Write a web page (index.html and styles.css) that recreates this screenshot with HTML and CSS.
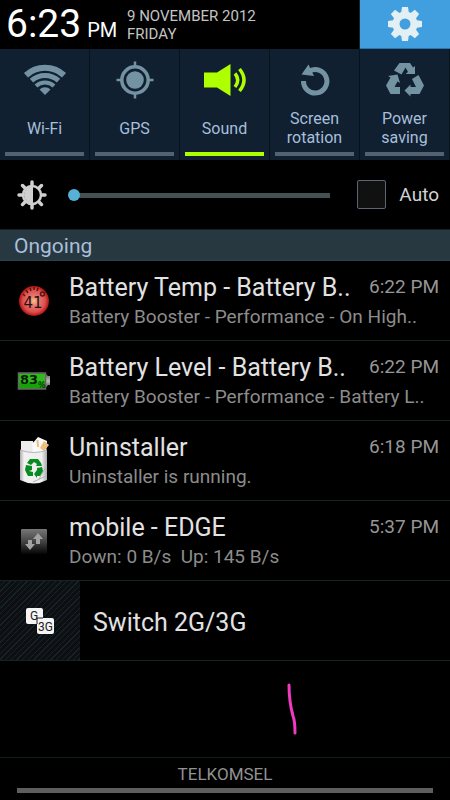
FILE: index.html
```html
<!DOCTYPE html>
<html lang="en">
<head>
<meta charset="utf-8">
<meta name="viewport" content="width=device-width, initial-scale=1">
<title>Notifications</title>
<link rel="stylesheet" href="styles.css">
</head>
<body>
<div class="panel">
  <header class="status">
    <div class="clock"><span class="clock-time">6:23</span><span class="clock-half">PM</span></div>
    <div class="date">9 NOVEMBER 2012<br>FRIDAY</div>
    <button class="settings" type="button" aria-label="Settings">
      <svg width="36" height="36" viewBox="-18 -18 36 36">
        <g fill="#e2f0f3">
          <g id="teeth"><path id="tooth" d="M-3-17H3L4-10H-4Z"/><use href="#tooth" transform="rotate(45)"/><use href="#tooth" transform="rotate(90)"/><use href="#tooth" transform="rotate(135)"/></g>
          <use href="#teeth" transform="rotate(180)"/>
        </g>
        <circle r="9" fill="none" stroke="#e2f0f3" stroke-width="7"/>
      </svg>
    </button>
  </header>

  <nav class="tiles">
    <button class="tile" type="button">
      <svg class="tile-icon" viewBox="0 0 48 40" fill="none" stroke="#7393a3">
        <path stroke-width="6" d="M5 15.200A28 28 0 0 1 43 15.200"/>
        <path stroke-width="5" d="M10.500 20.700A20 20 0 0 1 37.500 20.700"/>
        <path stroke-width="4" d="M15 26A13 13 0 0 1 33 26"/>
        <path fill="#7393a3" stroke="none" d="M24 35L18.500 29.500A8 8 0 0 1 29.500 29.500Z"/>
      </svg>
      <span class="tile-label">Wi-Fi</span>
      <span class="tile-bar"></span>
    </button>
    <button class="tile" type="button">
      <svg class="tile-icon" viewBox="0 0 48 40" fill="none" stroke="#7393a3">
        <circle cx="24" cy="20" r="13.200" stroke-width="3.500"/>
        <circle cx="24" cy="20" r="8.800" fill="#7393a3" stroke="none"/>
        <path stroke-width="2.500" d="M24 1.500V6M24 34V38.500M5.500 20H10M38 20H42.500"/>
      </svg>
      <span class="tile-label">GPS</span>
      <span class="tile-bar"></span>
    </button>
    <button class="tile tile-on" type="button" aria-pressed="true">
      <svg class="tile-icon" viewBox="0 0 48 40">
        <path fill="#aeff00" d="M3 12.500H16L29.500 4V36L16 27.500H3Z"/>
        <path fill="none" stroke="#aeff00" stroke-width="3.500" d="M34 13.500Q39.500 20 34 27M38.500 9Q47.500 20 38.500 31"/>
      </svg>
      <span class="tile-label">Sound</span>
      <span class="tile-bar"></span>
    </button>
    <button class="tile" type="button">
      <svg class="tile-icon" viewBox="0 0 48 40">
        <path fill="none" stroke="#7393a3" stroke-width="5" d="M12.500 21A11.700 11.700 0 1 0 19 10.800"/>
        <path fill="#7393a3" d="M10.500 14.500L17.500 4.500L23 16Z"/>
      </svg>
      <span class="tile-label">Screen rotation</span>
      <span class="tile-bar"></span>
    </button>
    <button class="tile" type="button">
      <svg class="tile-icon" viewBox="0 0 48 40" fill="#7393a3">
        <path d="M18.500 3H29L32 7.500L34 6V14H24.500L27 12L24.500 7.500L20.500 14.500L13 10.500Z"/>
        <path d="M7 16L16.500 14.500L19 23L16.500 21.500L13.500 27H19V34H9.500L5 25.500L9.500 17.500Z"/>
        <path d="M31 19L37.500 15L43 25.500L38.500 34H29.500V36.500L23.500 30.500L29.500 24.500V27H35Z"/>
      </svg>
      <span class="tile-label">Power saving</span>
      <span class="tile-bar"></span>
    </button>
  </nav>

  <section class="brightness">
    <svg class="sun" viewBox="-16 -16 32 32" fill="none" stroke="#d0d0d0">
      <circle r="9" stroke-width="2.500"/>
      <path d="M1-9A9 9 0 0 0 1 9Z" fill="#d0d0d0" stroke="none"/>
      <path stroke-width="3.500" stroke-linecap="round" d="M0-13V-10M0 13V10M-13 0H-10M13 0H10M-9.500-9.500L-7-7M9.500-9.500L7-7M-9.500 9.500L-7 7M9.500 9.500L7 7"/>
    </svg>
    <input class="slider" type="range" min="0" max="100" value="0" aria-label="Brightness">
    <label class="auto"><input class="check" type="checkbox">Auto</label>
  </section>

  <h2 class="section-title">Ongoing</h2>

  <ul class="list">
    <li class="item">
      <svg class="item-icon" viewBox="0 0 34 50">
        <defs><radialGradient id="red"><stop offset="0" stop-color="#f9c27c"/><stop offset=".3" stop-color="#e57c74"/><stop offset=".75" stop-color="#dc4f4c"/><stop offset="1" stop-color="#b01010"/></radialGradient></defs>
        <circle cx="17" cy="25" r="15" fill="url(#red)"/>
        <path d="M6 18L8 20M9 14L11 17M13 12L14 15M17 11V14M21 12L20 15" stroke="#571414" stroke-width="1.500"/>
        <circle cx="25.500" cy="18" r="2" fill="none" stroke="#571414" stroke-width="1.500"/>
        <text x="16" y="32" class="temp-text" text-anchor="middle">41</text>
      </svg>
      <div class="item-body">
        <div class="item-head"><span class="item-title">Battery Temp - Battery B..</span><time class="item-time">6:22 PM</time></div>
        <div class="item-text">Battery Booster - Performance - On High..</div>
      </div>
    </li>
    <li class="item">
      <svg class="item-icon" viewBox="0 0 34 50">
        <defs><linearGradient id="cap" x2="0" y2="1"><stop offset="0" stop-color="#555"/><stop offset=".5" stop-color="#bbb"/><stop offset="1" stop-color="#444"/></linearGradient></defs>
        <path d="M28 17L31 20H33V29H31L28 33Z" fill="url(#cap)"/>
        <rect x="1.500" y="17" width="27" height="16" fill="#18a008" stroke="#666" stroke-width="1.500"/>
        <path d="M2.500 18H28V25L20 27H2.500Z" fill="#32b91b"/>
        <text x="3" y="28" class="level-text">83</text>
        <text x="21" y="32" class="percent-text">%</text>
      </svg>
      <div class="item-body">
        <div class="item-head"><span class="item-title">Battery Level - Battery B..</span><time class="item-time">6:22 PM</time></div>
        <div class="item-text">Battery Booster - Performance - Battery L..</div>
      </div>
    </li>
    <li class="item">
      <svg class="item-icon" viewBox="0 0 34 50">
        <defs><linearGradient id="bin"><stop offset="0" stop-color="#aaa"/><stop offset=".15" stop-color="#f1f1f1"/><stop offset=".8" stop-color="#eee"/><stop offset="1" stop-color="#aaa"/></linearGradient></defs>
        <path d="M4 5H16L17 18H4Z" fill="#ececec"/>
        <path d="M15 8L21 1L30 5L29 18H16Z" fill="#fafafa"/>
        <path d="M27 5L32 9L27 15L23 12Z" fill="#efbd7c"/>
        <path d="M20.500 4L21 11" stroke="#efbd7c" stroke-width="2"/>
        <path d="M3 14Q17 19 30 14V44Q17 51 3 44Z" fill="url(#bin)"/>
        <path d="M3 14Q17 19 30 14M29 31L22 43M16 46L29 40" fill="none" stroke="#b4b4b4"/>
        <g fill="#078b20"><path d="M13 23H21L24 27L25 30H19L20 28L17 26L14 29L10 27Z"/><path d="M9 29L15 30L15 34L12 35L16 36V40H11L8 34Z"/><path d="M20 32L25 31L26 35L23 40H20V42L17 38L20 34Z"/></g>
      </svg>
      <div class="item-body">
        <div class="item-head"><span class="item-title">Uninstaller</span><time class="item-time">6:18 PM</time></div>
        <div class="item-text">Uninstaller is running.</div>
      </div>
    </li>
    <li class="item">
      <svg class="item-icon" viewBox="0 0 34 50">
        <defs><linearGradient id="fade" x2="0" y2="1"><stop offset="0" stop-color="#777"/><stop offset=".5" stop-color="#444"/><stop offset="1" stop-color="#050505"/></linearGradient></defs>
        <rect x="4" y="13" width="26" height="25" rx="1" fill="url(#fade)"/>
        <path fill="#a2a2a2" d="M11 24H15V28H18L13 34L8 28H11ZM19 28V23H16L21 17L26 23H23V28Z"/>
      </svg>
      <div class="item-body">
        <div class="item-head"><span class="item-title">mobile - EDGE</span><time class="item-time">5:37 PM</time></div>
        <div class="item-text">Down: 0 B/s&nbsp; Up: 145 B/s</div>
      </div>
    </li>
    <li class="item item-switch">
      <div class="thumb">
        <svg width="30" height="28" viewBox="0 0 30 28">
          <rect x="1" y="1" width="17" height="16" rx="2" fill="#f5f5f5"/>
          <rect x="12" y="11" width="17" height="16" rx="2" fill="#f5f5f5"/>
          <path d="M12 17V11H18" fill="none" stroke="#222"/>
          <text x="5" y="13" class="badge-text">G</text>
          <text x="13" y="24" class="badge-text">3G</text>
        </svg>
      </div>
      <span class="item-title">Switch 2G/3G</span>
    </li>
  </ul>

  <div class="space">
    <svg class="stroke" width="14" height="56" viewBox="0 0 14 56"><path d="M4 4C4 14 5 24 8 35Q10 40 10 52" fill="none" stroke="#f03ac0" stroke-width="3" stroke-linecap="round"/></svg>
  </div>

  <footer class="carrier"><span>TELKOMSEL</span><span class="handle"></span></footer>
</div>
</body>
</html>
```
FILE: styles.css
```css
* { box-sizing: border-box; }
body { margin: 0; background: #000; color: #e2e2e2; font-family: Roboto, "Liberation Sans", sans-serif; }
button { font: inherit; border: 0; padding: 0; margin: 0; background: none; }
svg { display: block; flex: none; }
.panel { min-height: 100vh; display: flex; flex-direction: column; }

.status { display: flex; height: 49px; }
.clock { display: flex; align-items: baseline; gap: 6px; padding-left: 6px; width: 127px; color: #fff; line-height: 48px; white-space: nowrap; }
.clock-time { font-size: 39px; }
.clock-half { font-size: 20px; }
.date { flex: 1; padding-top: 7px; font-size: 15px; line-height: 18px; color: #c4c4c4; border-right: 1px solid #222; }
.settings { width: 20%; display: grid; place-items: center; background: #419fe0; border-bottom: 1px solid #2378b5; }

.tiles { display: grid; grid-template-columns: repeat(5, 1fr); }
.tile { display: flex; flex-direction: column; align-items: center; height: 111px; padding: 11px 5px 4px; background: #112030; border-right: 1px solid #07121b; color: #a6bfdb; }
.tile-icon { width: 48px; height: 40px; }
.tile-label { flex: 1; display: flex; align-items: center; padding-top: 4px; text-align: center; font-size: 16px; line-height: 19px; }
.tile-bar { width: 100%; height: 4px; background: #536170; }
.tile-on .tile-bar { background: #aeff00; }

.brightness { display: flex; align-items: center; height: 69px; padding: 0 11px 0 16px; }
.sun { width: 32px; height: 32px; }
.slider { appearance: none; flex: 1; min-width: 0; height: 12px; margin: 0 27px 0 20px; background: linear-gradient(#445052, #445052) 6px 4px / 100% 5px no-repeat; }
.slider::-webkit-slider-thumb { appearance: none; width: 12px; height: 12px; border-radius: 50%; background: #55b1d5; }
.auto { display: flex; align-items: center; gap: 13px; font-size: 19px; color: #d2d2d2; }
.check { appearance: none; width: 29px; height: 29px; margin: 0; background: #111; border: 1px solid #5b6672; border-radius: 2px; }

.section-title { margin: 0; height: 32px; padding-left: 14px; background: #283840; border-bottom: 1px solid #294351; border-top: 1px solid #15242a; font-size: 21px; font-weight: 400; line-height: 33px; color: #a9bfdc; }
.list { list-style: none; margin: 0; padding: 0; }
.item { display: flex; align-items: center; height: 80px; padding: 0 11px 0 17px; border-bottom: 1px solid #142427; }
.item-icon { width: 34px; height: 50px; margin-right: 18px; }
.item-body { flex: 1; min-width: 0; padding-top: 2px; }
.item-head { display: flex; justify-content: space-between; line-height: 30px; white-space: nowrap; }
.item-title { font-size: 25px; }
.item-time { font-size: 19px; line-height: 27px; color: #969696; }
.item-text { font-size: 19px; line-height: 28px; color: #8c8c8c; white-space: nowrap; }
.item-switch { padding-left: 0; gap: 13px; }
.item-switch .item-title { padding-top: 4px; }
.thumb { width: 80px; align-self: stretch; display: grid; place-items: center; background: repeating-linear-gradient(135deg, #0e0f10 0 3px, #15232c 3px 4px); }
.temp-text { font: 15px "DejaVu Sans", sans-serif; fill: #2a1010; }
.level-text { font: bold 13px "DejaVu Sans", sans-serif; fill: #061b04; }
.percent-text { font: 8px "DejaVu Sans", sans-serif; fill: #061b04; }
.badge-text { font: 12px Roboto, sans-serif; fill: #222; }

.space { flex: 1; display: flex; justify-content: center; padding: 20px 0 0 134px; }
.carrier { display: flex; flex-direction: column; align-items: center; height: 43px; padding: 4px 17px 0; border-top: 1px solid #101d20; font-size: 17px; line-height: 24px; color: #929292; }
.handle { align-self: stretch; height: 5px; margin-top: 2px; background: #5e5e5e; }
```
